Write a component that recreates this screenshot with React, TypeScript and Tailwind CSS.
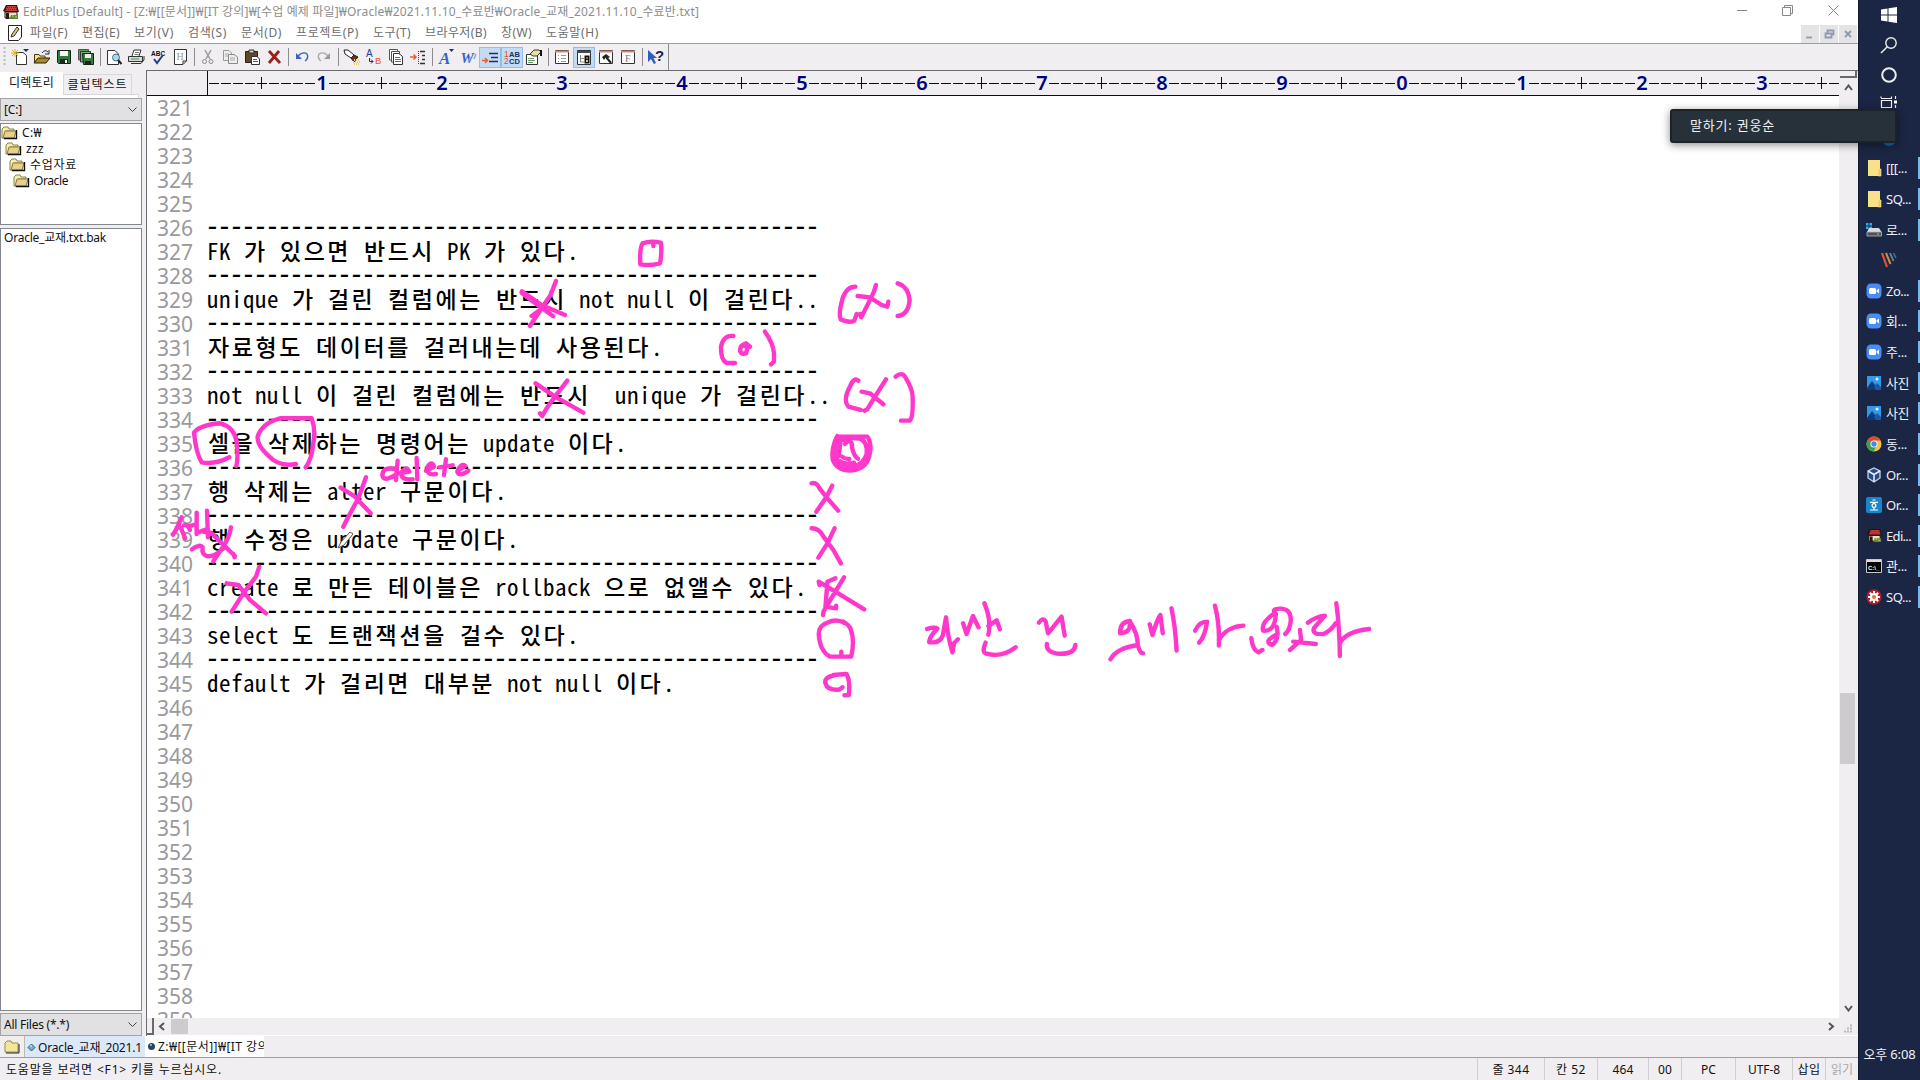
import { useLayoutEffect, useRef } from 'react';
import type { ReactNode } from 'react';

/** Text whose letter spacing is adjusted so that it spans `w` pixels. */
function Fit({ w, children, className = '' }: { w: number; children: string; className?: string }) {
  const ref = useRef<HTMLSpanElement>(null);
  useLayoutEffect(() => {
    const el = ref.current;
    if (!el) return;
    el.style.letterSpacing = '0px';
    const natural = el.getBoundingClientRect().width;
    el.style.letterSpacing = `${(w - natural) / children.length}px`;
  }, [w, children]);
  return (
    <span ref={ref} className={`inline-block shrink-0 whitespace-pre ${className}`}>
      {children}
    </span>
  );
}

const RULE = '-'.repeat(51);
const LINES: Record<number, string> = {
  326: RULE,
  327: 'FK 가 있으면 반드시 PK 가 있다.',
  328: RULE,
  329: 'unique 가 걸린 컬럼에는 반드시 not null 이 걸린다..',
  330: RULE,
  331: '자료형도 데이터를 걸러내는데 사용된다.',
  332: RULE,
  333: 'not null 이 걸린 컬럼에는 반드시  unique 가 걸린다..',
  334: RULE,
  335: '셀을 삭제하는 명령어는 update 이다.',
  336: RULE,
  337: '행 삭제는 alter 구문이다.',
  338: RULE,
  339: '행 수정은 update 구문이다.',
  340: RULE,
  341: 'create 로 만든 테이블은 rollback 으로 없앨수 있다.',
  342: RULE,
  343: 'select 도 트랜잭션을 걸수 있다.',
  344: RULE,
  345: 'default 가 걸리면 대부분 not null 이다.',
};

function CodeLine({ text }: { text: string }) {
  if (text === RULE) {
    return (
      <span className="mb-[2px] -ml-[3px] font-['DejaVu_Sans_Mono',monospace] text-[28px] leading-6 tracking-[-4.857px]">{text}</span>
    );
  }
  const runs = text.match(/[가-힣]+|[^가-힣]+/g) ?? [];
  return (
    <span className="mb-[5px] flex items-center">
      {runs.map((r, i) =>
        /[가-힣]/.test(r) ? (
          <Fit key={i} w={r.length * 24} className="pl-px font-['Noto_Sans_CJK_KR',sans-serif] text-[23px] font-medium">
            {r}
          </Fit>
        ) : (
          <Fit key={i} w={r.length * 12} className="font-['Noto_Sans_Mono_CJK_KR','DejaVu_Sans_Mono',monospace] text-[23px] font-medium">
            {r}
          </Fit>
        ),
      )}
    </span>
  );
}

const I = ({ children, w = 18, h = 16 }: { children: ReactNode; w?: number; h?: number }) => (
  <svg width={w} height={h} viewBox={`0 0 ${w} ${h}`} fill="none" className="shrink-0">
    {children}
  </svg>
);

const FolderOpen = () => (
  <I w={17} h={14}>
    <path d="M1 3 L3 1 H7 L8 3 H13 V5 H5 L3 12 H1Z" fill="#f5edb0" stroke="#8a8340" />
    <path d="M4 5 H15 L13 12 H2Z" fill="#e8d08c" stroke="#8a7a40" />
    <path d="M15.500 4 V12.500 H3" stroke="#111" strokeWidth="1.400" />
  </I>
);

const House = ({ s = 16 }: { s?: number }) => (
  <svg width={s} height={s} viewBox="0 0 16 16" className="shrink-0">
    <path d="M3 1 H14 L16 8 H2 L0 7Z" fill="#2a1010" />
    <path d="M4 2 H13 L14.500 7 H2Z" fill="#c9403a" />
    <path d="M4 3.500 H13 M3 5.500 H14" stroke="#7b1c1c" strokeDasharray="1 1" />
    <path d="M2 8 H14 V14 H2Z" fill="#eadfc8" stroke="#2a1010" />
    <path d="M3 9 H6 V15 H3Z" fill="#301515" />
    <path d="M8 11 H15 V15 H7Z" fill="#5f8a35" />
    <path d="M9 12 h2 M12 13 h2" stroke="#e7c84a" />
  </svg>
);

const A = { fontFamily: 'Liberation Sans' };

const TOOLS: (ReactNode | '|')[] = [
  <I><path d="M5.500 3.500 H12 L15.500 6.500 V15.500 H5.500Z" fill="#fff" stroke="#333" /><path d="M4 0 V8 M0 4 H8 M1 1 L7 7 M7 1 L1 7" stroke="#e8b020" /><path d="M12 0 H18 L15 3Z" fill="#1d2f6b" /></I>,
  <I><path d="M1.500 13 V5.500 H6 L7 7 H12 V9" fill="#f5e08c" stroke="#4a3a10" /><path d="M1 14 L5 9 H17 L13 14Z" fill="#a88735" stroke="#2b2208" /><path d="M9 4 Q12 0 15 3 M16 1 V5 H12" stroke="#222" /></I>,
  <I><path d="M2.500 1.500 H15.500 V14.500 H3.500 L2.500 13.500Z" fill="#2f7a3b" stroke="#12260f" /><path d="M5 2 H13 V7 H5Z" fill="#f4f4f4" /><path d="M5 10 H13 V14 H5Z" fill="#222" /><path d="M10 11 h2 v3 h-2Z" fill="#fff" /></I>,
  <I><path d="M1.500 .5 H11.500 V11 H1.500Z" fill="#5c9c62" stroke="#4a5a48" /><path d="M3.500 2.500 H13.500 V13 H3.500Z" fill="#7fae80" stroke="#333" /><path d="M5.500 4.500 H16.500 V15.500 H6.500Z" fill="#3b7a41" stroke="#12260f" /><path d="M8 5 H14 V9 H8Z" fill="#eee" /><path d="M8 12 H14 V15 H8Z" fill="#222" /></I>,
  '|',
  <I><path d="M2.500 1.500 H10 L13.500 5 V15.500 H2.500Z" fill="#fff" stroke="#333" /><circle cx="11" cy="8.500" r="3.500" fill="#a9d8ea" stroke="#44707f" /><path d="M13 11 L16.500 15" stroke="#222" strokeWidth="2" /></I>,
  <I><path d="M5 7 L7 1 H14 L12 7" fill="#fff" stroke="#333" /><path d="M1.500 7.500 H15.500 V12.500 H1.500Z" fill="#d8d8d8" stroke="#333" /><path d="M4 14.500 H14 L17 11 V7" stroke="#333" /><path d="M4 10 h8" stroke="#4a9a4a" /><path d="M8 3.500 h4 M7.500 5.500 h4" stroke="#777" /></I>,
  <I><text x="2" y="6.500" fontSize="6.500" fontWeight="700" fill="#111" style={A}>ABC</text><path d="M5 10 L8 14 L14 6" stroke="#1d3f8c" strokeWidth="2" /></I>,
  <I><path d="M3.500 .5 H15.500 V12 L12 15.500 H3.500Z" fill="#fff" stroke="#333" /><path d="M12 15 V12 H15" stroke="#333" /><text x="5.500" y="10.500" fontSize="10" fill="#999" fontFamily="Liberation Serif">H</text></I>,
  '|',
  <I><path d="M6 1 L11 10 M12 1 L7 10" stroke="#9a9a9a" strokeWidth="1.500" /><circle cx="5.500" cy="12.500" r="2" stroke="#8a8a8a" /><circle cx="12" cy="12.500" r="2" stroke="#8a8a8a" /></I>,
  <I><path d="M2.500 1.500 H8 L10.500 4 V11.500 H2.500Z" fill="#eee" stroke="#999" /><path d="M7.500 5.500 H13 L16.500 8 V14.500 H7.500Z" fill="#eee" stroke="#8a8a8a" /><path d="M4 5 h4 M4 7 h3 M9 9 h5 M9 11 h5" stroke="#aaa" /></I>,
  <I><path d="M2.500 2.500 H14.500 V13.500 H2.500Z" fill="#5f4a2a" stroke="#222" /><path d="M6 1 H11 V4 H6Z" fill="#ccc" stroke="#333" /><path d="M8.500 7.500 H14 L16.500 10 V15.500 H8.500Z" fill="#fff" stroke="#333" /><path d="M10 10.500 h4 M10 12.500 h5" stroke="#2a6a8a" /></I>,
  <I><path d="M4 2 L15 14 M14 2 L4 14" stroke="#9e1f1a" strokeWidth="2.800" /></I>,
  '|',
  <I><path d="M5 7 Q10 2 14 5 Q16 9 12 12" stroke="#3a5fc8" strokeWidth="1.400" /><path d="M3 4 V10 H9Z" fill="#3a5fc8" /></I>,
  <I><path d="M13 7 Q9 2 4 5 Q2 9 6 12" stroke="#aaa" strokeWidth="1.400" /><path d="M15 4 V10 H9Z" fill="#999" /></I>,
  '|',
  <I><path d="M1 1 H5 L11 6 L8 9 L2 5Z" fill="#fff" stroke="#222" /><path d="M8 9 L11 6 L15 8 L11 13Z" fill="#7a231c" stroke="#222" /><path d="M11 11 h6 M10 13 h7 M11 15 h6" stroke="#e6d070" strokeDasharray="1 1" strokeWidth="2" /></I>,
  <I><text x="1" y="8" fontSize="10" fill="#1d3f8c" style={A}>A</text><text x="10" y="15" fontSize="9.500" fill="#e8503a" style={A}>B</text><path d="M4.500 9 V12.500 H8 M6 10.500 L8 12.500 L6 14.500" stroke="#1d2f6b" /></I>,
  <I><path d="M2.500 .5 H10.500 V11 H2.500Z" fill="#fff" stroke="#555" /><path d="M4.500 2.500 H12.500 V13 H4.500Z" fill="#fff" stroke="#555" /><path d="M6.500 4.500 H12 L15.500 7.500 V15.500 H6.500Z" fill="#fff" stroke="#333" /><path d="M8 8.500 h5 M8 10.500 h6 M8 12.500 h6" stroke="#3a8a5a" /></I>,
  <I><path d="M1 8 H7 M4.500 5.500 L7 8 L4.500 10.500" stroke="#e86030" strokeWidth="1.500" /><path d="M9.500 2 V15" stroke="#444" strokeDasharray="1 1" /><path d="M11 2.500 h5 M13 6.500 h3 M13 10.500 h3 M11 14.500 h5" stroke="#333" strokeWidth="1.400" /></I>,
  '|',
  <I><text x="2" y="14.500" fontSize="17" fontStyle="italic" fontWeight="700" fill="#3a62c4" fontFamily="Liberation Serif">A</text><path d="M12 0 H17 L14.500 3Z" fill="#1d2f6b" /></I>,
  <I><text x="1.500" y="14" fontSize="15" fontStyle="italic" fontWeight="700" fill="#3a62c4" fontFamily="Liberation Serif">W</text><path d="M9 13 L12 8 M15 10 L17 5" stroke="#8aa4dc" strokeWidth="1.500" /></I>,
  <I><path d="M8 4.500 H17 M10 8.500 H17 M8 12.500 H17" stroke="#1d2f6b" strokeWidth="1.500" /><path d="M1 11.500 H6 M4 9 L6.500 11.500 L4 14" stroke="#e86030" strokeWidth="1.500" /></I>,
  <I><text x="1" y="7.500" fontSize="8.500" fill="#e8502a" style={A}>1</text><text x="6" y="7.500" fontSize="7.500" fontWeight="700" fill="#1d2f6b" style={A}>AB</text><text x="1" y="15" fontSize="8.500" fill="#e8502a" style={A}>2</text><text x="6" y="15" fontSize="7.500" fontWeight="700" fill="#1d2f6b" style={A}>CD</text></I>,
  <I><path d="M1.500 5.500 H12.500 V15.500 H1.500Z" fill="#fff" stroke="#333" /><path d="M3 9.500 h6 M3 11.500 h7 M3 13.500 h5" stroke="#6a9a6a" /><path d="M5 5 L9 1 H14 L16 3 L12 7 H8Z" fill="#e3e3a0" stroke="#333" /><path d="M16 1 V7" stroke="#111" strokeWidth="2" /></I>,
  '|',
  <I><path d="M2.500 1.500 H15.500 V14.500 H2.500Z" fill="#fff" stroke="#333" /><path d="M2 2.500 H16" stroke="#c98a78" strokeWidth="2" /><path d="M5 6.500 h1 M5 9.500 h1 M5 12.500 h1 M8 6.500 h5 M8 9.500 h5 M8 12.500 h5" stroke="#999" /></I>,
  <I><path d="M2.500 1.500 H15.500 V15.500 H2.500Z" fill="#fff" stroke="#333" /><path d="M2 3 H16" stroke="#4a4a4a" strokeWidth="2" /><path d="M5.500 6 V13 H9 M5 9.500 h4" stroke="#888" /><path d="M9.500 6.500 H14.500 V14.500 H9.500Z" fill="#111" /><path d="M11 8 h2 v2 h-2Z" fill="#e33" /><path d="M11 11 h2 v2 h-2Z" fill="#8e8" /></I>,
  <I><path d="M2.500 1.500 H15.500 V14.500 H2.500Z" fill="#fff" stroke="#333" /><path d="M2 2.500 H16" stroke="#c98a78" strokeWidth="2" /><path d="M5 8 L9 5 L13 8 L11 9 L9 8 L7 11Z" fill="#222" /><path d="M9 8 L14 14" stroke="#222" strokeWidth="2" /></I>,
  <I><path d="M2.500 1.500 H15.500 V14.500 H2.500Z" fill="#fff" stroke="#333" /><path d="M2 2.500 H16" stroke="#c98a78" strokeWidth="2" /><text x="6" y="13" fontSize="10" fill="#777" fontFamily="Liberation Serif">F</text></I>,
  '|',
  <I><path d="M1 1 L1 13 L4 10 L7 15 L9 14 L6.500 9 H10Z" fill="#2f5fc4" /><text x="8" y="12" fontSize="15" fontWeight="700" fill="#1a2250" style={A}>?</text></I>,
];
const ACTIVE = new Set([25, 26, 30]);

const MENUS: [string, number][] = [
  ['파일(F)', 38], ['편집(E)', 38], ['보기(V)', 40], ['검색(S)', 39], ['문서(D)', 41],
  ['프로젝트(P)', 63], ['도구(T)', 38], ['브라우저(B)', 62], ['창(W)', 31], ['도움말(H)', 53],
];

function Ruler() {
  const cells = Array.from({ length: 136 }, (_, i) => i);
  return (
    <div className="flex h-[25px] shrink-0 border-b border-[#00007c] bg-[#f0eef1] pl-[60px]">
      <div className="flex h-full items-center border-l border-[#00007c]">
        {cells.map((i) => {
          if (i % 10 === 9)
            return (
              <span key={i} className="w-3 text-center font-['Noto_Sans',sans-serif] text-[20px] leading-[22px] font-semibold text-[#00007c]">
                {((i + 1) / 10) % 10}
              </span>
            );
          return (
            <span key={i} className="flex h-3 w-3 items-center justify-center">
              <span className="h-px w-[10px] bg-[#00007c]" />
              {i % 10 === 4 && <span className="mr-[5px] -ml-[6px] h-3 w-px bg-[#00007c]" />}
            </span>
          );
        })}
      </div>
    </div>
  );
}

const Combo = ({ children, w }: { children: string; w: number }) => (
  <div className="flex h-[23px] w-[142px] shrink-0 items-center justify-between border border-[#a3a2a5] bg-[#e1e0e2] pt-px pr-1 pl-[3px]">
    <Fit w={w}>{children}</Fit>
    <I w={9} h={6}><path d="M.5 .5 L4.500 4.500 L8.500 .5" stroke="#444" /></I>
  </div>
);

const TREE: [string, number, string][] = [
  ['C:₩', 20, 'pl-0'], ['zzz', 18, 'pl-[4px]'], ['수업자료', 47, 'pl-[8px]'], ['Oracle', 34, 'pl-[12px]'],
];

function SidePanel() {
  return (
    <div className="flex w-[146px] shrink-0 flex-col bg-[#f0eef1] text-[#111]">
      <div className="flex h-[28px] shrink-0 pt-[2px]">
        <div className="flex h-[26px] w-[63px] justify-center bg-white pt-[3px]"><Fit w={45}>디렉토리</Fit></div>
        <div className="flex h-[26px] w-[76px] flex-col border-r border-transparent">
          <div className="mt-[2px] flex h-[20px] w-[69px] items-center justify-center border border-b-0 border-[#d8d7da]"><Fit w={60}>클립텍스트</Fit></div>
          <div className="h-[4px] w-[76px] border-t border-r border-[#d8d7da] bg-white" />
        </div>
      </div>
      <Combo w={18}>[C:]</Combo>
      <div className="mt-[2px] flex h-[102px] w-[142px] shrink-0 flex-col border border-[#828790] bg-white pt-px">
        {TREE.map(([t, w, pad]) => (
          <div key={t} className={`flex h-[15.900px] items-center gap-1 ${pad}`}><FolderOpen /><Fit w={w}>{t}</Fit></div>
        ))}
      </div>
      <div className="mt-[3px] w-[142px] flex-1 border border-[#828790] bg-white pl-[3px] leading-[18px]"><Fit w={102}>Oracle_교재.txt.bak</Fit></div>
      <div className="mt-[2px]"><Combo w={65}>All Files (*.*)</Combo></div>
    </div>
  );
}

function Editor() {
  const rows = Array.from({ length: 39 }, (_, i) => 321 + i);
  return (
    <div className="flex min-w-0 flex-1 flex-col border-t border-l border-[#6b6a6d] bg-[#f0eef1]">
      <div className="flex min-h-0 flex-1">
        <div className="flex w-[1692px] shrink-0 flex-col overflow-hidden bg-white">
          <Ruler />
          <div className="flex-1 overflow-hidden">
            {rows.map((n) => (
              <div key={n} className="flex h-6 items-center leading-6">
                <span className="mb-px w-[60px] shrink-0 pl-[10px] font-['Noto_Sans',sans-serif] text-[21px] text-[#9b999b]">
                  <Fit w={36}>{String(n)}</Fit>
                </span>
                <span className="flex h-6 items-center leading-6 whitespace-pre text-black">
                  {LINES[n] && <CodeLine text={LINES[n]} />}
                </span>
              </div>
            ))}
          </div>
        </div>
        <div className="flex w-[18px] flex-col items-center">
          <div className="h-[7px] w-[17px] border-r-2 border-b-2 border-[#69686b] bg-[#f0eef1]" />
          <div className="mt-[6px]"><I w={9} h={7}><path d="M1 6 L4.500 1.500 L8 6" stroke="#555" strokeWidth="2" /></I></div>
          <div className="mt-[602px] mr-[2px] h-[71px] w-[15px] bg-[#cdcbcd]" />
          <div className="mt-auto mb-[6px]"><I w={9} h={7}><path d="M1 1 L4.500 5.500 L8 1" stroke="#555" strokeWidth="2" /></I></div>
        </div>
      </div>
      <div className="flex h-[18px] shrink-0 items-center border-b border-white">
        <div className="h-[17px] w-[7px] border-r-2 border-b-2 border-[#69686b]" />
        <div className="ml-1 w-[13px]"><I w={8} h={9}><path d="M6 1 L2 4.500 L6 8" stroke="#555" strokeWidth="2" /></I></div>
        <div className="h-[15px] w-[17px] bg-[#cdcbcd]" />
        <div className="ml-auto"><I w={8} h={9}><path d="M2 1 L6 4.500 L2 8" stroke="#555" strokeWidth="2" /></I></div>
        <div className="mt-1 mr-[5px] ml-[9px]"><I w={9} h={9}><path d="M6 1.500 h2 M3 4.500 h2 M6 4.500 h2 M0 7.500 h2 M3 7.500 h2 M6 7.500 h2" stroke="#b8b7ba" strokeWidth="2" /></I></div>
      </div>
    </div>
  );
}

const Diamond = ({ dark = false }: { dark?: boolean }) => (
  <I w={9} h={9}>
    {dark ? <circle cx="4.500" cy="4.500" r="3.500" fill="#1f4a60" /> : <path d="M4.500 1 L8 4.500 L4.500 8 L1 4.500Z" fill="#6fb0dc" stroke="#2a5a7a" />}
    <path d="M3 3 h2" stroke="#fff" />
  </I>
);

const Cell = ({ w, children, cls }: { w: number; children: string; cls: string }) => (
  <div className={`flex h-full shrink-0 items-center justify-center border-l border-[#cfced1] pt-[2px] ${cls}`}><Fit w={w}>{children}</Fit></div>
);

const Folder = () => (
  <I w={16} h={18}><path d="M2 1 H14 V17 H2Z" fill="#fbe08a" /><path d="M12 10 H15 V17 H12Z" fill="#eec95c" stroke="#fbe9a8" strokeWidth=".6" /></I>
);
const Zoom = () => (
  <I w={16} h={16}><rect x=".5" y=".5" width="15" height="15" rx="4.500" fill="#4a8cf7" /><rect x="3" y="5" width="7" height="6" rx="1.500" fill="#fff" /><path d="M10.500 7.500 L13 5.500 V10.500 L10.500 8.500Z" fill="#fff" /></I>
);
const Photo = () => (
  <I w={16} h={16}><path d="M1 1 H15 V15 H1Z" fill="#2f9ae8" /><path d="M1 13 L6 6 L13 15 H1Z" fill="#0f3a78" /><path d="M8 12 L11 8 L15 12 V15 H10Z" fill="#1b58a8" /><circle cx="11" cy="4" r="1.500" fill="#e6f4ff" /></I>
);
const TASKS: [ReactNode, string, number][] = [
  [<Folder />, '[[[...', 21],
  [<Folder />, 'SQ...', 25],
  [<I w={16} h={16}><path d="M0 1 h2.500 v2.500 h-2.500Z M3.500 1 h2.500 v2.500 h-2.500Z M0 4.500 h2.500 v2.500 h-2.500Z M3.500 4.500 h2.500 v2.500 h-2.500Z" fill="#29b0ee" /><path d="M3 6 H13 L15.500 10 H1Z" fill="#d7dadd" /><path d="M1 10 H15.500 V14 H1Z" fill="#4c5258" stroke="#b9bdc1" strokeWidth=".8" /><path d="M11 12 h2" stroke="#6de04a" /></I>, '로...', 21],
  [null, '', 0],
  [<Zoom />, 'Zo...', 23],
  [<Zoom />, '회...', 21],
  [<Zoom />, '주...', 21],
  [<Photo />, '사진', 23],
  [<Photo />, '사진', 23],
  [<I w={16} h={16}><circle cx="8" cy="8" r="7.500" fill="#f2c534" /><path d="M8 8 L1.500 4.300 A7.500 7.500 0 0 1 14.600 4.500 H8Z" fill="#e2483a" /><path d="M1.500 4.300 A7.500 7.500 0 0 0 7.500 15.500 L10.500 10 L8 8Z" fill="#37a053" /><circle cx="8" cy="8" r="3.600" fill="#fff" /><circle cx="8" cy="8" r="2.700" fill="#4787ee" /></I>, '동...', 21],
  [<I w={16} h={16}><path d="M8 1 L14 4 V11 L8 15 L2 11 V4Z" fill="#294a80" stroke="#c4d6ea" strokeWidth="1.300" /><path d="M2 4 L8 7.500 L14 4 M8 7.500 V15" stroke="#e2ecf6" strokeWidth="1.600" /></I>, 'Or...', 22],
  [<I w={16} h={16}><rect width="16" height="16" rx="2" fill="#1787cc" /><path d="M6.500 3 h3 M4 5.300 h8 M8 10.500 v2 M4 13 h8" stroke="#fff" strokeWidth="1.200" /><circle cx="8" cy="8.500" r="1.900" stroke="#fff" strokeWidth="1.200" /></I>, 'Or...', 22],
  [<House s={15} />, 'Edi...', 25],
  [<I w={16} h={14}><path d="M.5 .5 H15.500 V13.500 H.5Z" fill="#000" stroke="#c8c8c8" /><path d="M1 2 H15" stroke="#ddd" strokeWidth="2" /><text x="2" y="10.500" fontSize="6" fontWeight="700" fill="#fff" style={A}>C:\_</text></I>, '관...', 21],
  [<I w={16} h={16}><circle cx="8" cy="8" r="7.700" fill="#a81f30" /><path d="M8 2 V14 M2 8 H14 M3.800 3.800 L12.200 12.200 M12.200 3.800 L3.800 12.200" stroke="#fff" strokeWidth="2" /><circle cx="8" cy="8" r="4" fill="#fff" /><circle cx="8" cy="8" r="2" fill="#e8702a" /></I>, 'SQ...', 25],
];

function Taskbar() {
  return (
    <div className="flex w-[62px] shrink-0 flex-col items-center border-l border-[#131b33] bg-[#1b2644] text-[13px] text-[#eef1f6]">
      <div className="mr-px flex h-[30px] items-center"><I w={18} h={18}><path d="M1 3.500 L7.500 2.500 V8.500 H1Z M8.500 2.300 L17 1 V8.500 H8.500Z M1 9.500 H7.500 V15.500 L1 14.500Z M8.500 9.500 H17 V17 L8.500 15.700Z" fill="#fff" /></I></div>
      <div className="mr-px flex h-[30px] items-center"><I w={18} h={18}><circle cx="11" cy="7" r="5.200" stroke="#eee" strokeWidth="1.400" /><path d="M7.300 10.700 L1 17" stroke="#eee" strokeWidth="1.500" /></I></div>
      <div className="mr-px flex h-[30px] items-center"><I w={18} h={18}><circle cx="9" cy="9" r="6.800" stroke="#eee" strokeWidth="2" /></I></div>
      <div className="mr-px flex h-[63px] items-start pt-[6px]"><I w={18} h={14}><path d="M1.500 4.500 H11.500 V11.500 H1.500Z M1 2 V.5 M11.500 2 V.5 M1 2.500 H12 M15.500 0 V3 M15.500 9 V12" stroke="#eee" strokeWidth="1.200" /><path d="M14 4.500 h3 v3 h-3Z" fill="#fff" /></I></div>
      {TASKS.map(([icon, label, w], i) =>
        label ? (
          <div key={i} className="flex h-[30.640px] w-full items-center pl-[7px]">
            <span className="flex w-4 justify-center">{icon}</span>
            <span className="ml-[4px]"><Fit w={w}>{label}</Fit></span>
            <span className="ml-auto h-[22px] w-[2px] bg-[#76b9ed]" />
          </div>
        ) : (
          <div key={i} className="mr-px flex h-[30.640px] items-center">
            <I w={18} h={18}><path d="M2 2 L7 16" stroke="#d8563c" strokeWidth="2.200" /><path d="M6 2 L10.500 13" stroke="#d98a4a" strokeWidth="2" /><path d="M10 2 L13.500 10" stroke="#5f8f92" strokeWidth="1.800" /><path d="M13.500 2 L16 7" stroke="#3c6fa8" strokeWidth="1.600" /></I>
          </div>
        ),
      )}
      <div className="mt-auto mb-[16px] flex h-5 items-center"><Fit w={52}>오후 6:08</Fit></div>
    </div>
  );
}

const STROKES = [
  { t: 'translate(140 210) scale(.3333)', d: 'M1145 248 L1180 275 L1240 319 M1146 244 L1205 285 L1275 315 M1248 213 L1232 255 L1205 295 L1170 348 M1175 318 L1200 300 M1187 520 L1245 560 L1330 608 M1282 512 L1245 560 L1220 595 L1207 618 L1200 610 M268 742 Q225 765 185 757 Q168 730 162 668 Q180 645 240 640 Q280 650 289 690 Q296 740 289 768 M468 762 Q430 770 400 750 Q350 710 353 680 Q365 640 420 625 L515 625 Q528 660 520 700 Q515 750 497 772' },
  { t: 'translate(600 210) scale(.3333)', d: 'M128 100 Q118 115 121 163 Q150 168 180 160 Q186 130 183 98 Q150 92 128 100 M160 97 V108 M766 230 Q740 230 728 265 Q715 310 722 328 Q745 340 763 332 L770 312 M773 258 L810 262 L845 285 L862 290 L865 275 M828 225 L822 245 L800 290 L784 322 L780 312 M893 220 Q925 230 929 270 Q925 315 893 318 M400 378 Q370 375 363 410 Q362 450 380 459 H405 M450 410 L438 400 Q420 405 420 422 Q425 435 438 430 L443 412 L428 406 M495 365 Q520 400 522 430 L522 455 L513 463 M775 512 Q762 500 750 530 Q728 570 745 590 L782 600 M785 545 L810 550 L850 583 M858 508 L825 560 L802 598 L793 602 M887 500 Q905 485 915 500 Q940 540 938 565 Q940 620 930 632 H903' },
  { t: 'translate(600 210) scale(.3333)', d: 'M712 678 Q694 712 698 748 Q710 782 752 782 Q798 778 808 738 Q818 700 802 680 H712 M722 688 Q706 712 708 742 Q722 774 758 770 Q792 762 800 732 Q804 696 780 686 Q745 680 722 692 L716 738 M726 740 Q736 748 748 747 M735 702 L748 690 Q758 700 756 712 Q762 740 774 746 M716 752 Q735 766 762 758' },
  { t: 'translate(150 440) scale(.3333)', d: 'M572 143 L615 170 L662 220 M648 112 L625 175 L590 240 L580 260 M743 62 L738 120 M733 87 Q700 80 697 105 Q700 128 738 104 M748 100 L778 95 Q770 76 755 96 Q750 122 788 118 M800 54 L802 118 M828 92 L852 80 Q846 62 834 78 Q826 108 858 102 M888 58 L882 105 M868 82 L908 76 M924 92 L946 78 Q932 68 922 95 Q928 112 955 92 M230 430 L265 435 L300 480 L348 520 M328 380 L318 410 L280 460 L245 515' },
  { t: 'translate(60 500) scale(.3333)', d: 'M365 52 Q352 85 339 104 M350 82 Q366 80 366 92 L376 115 M372 76 Q382 72 390 90 M410 38 V102 M441 32 L444 112 M384 80 L410 72 M412 98 L440 88 M396 148 Q420 130 428 142 Q424 162 440 168 Q466 172 488 146 M432 96 Q452 92 465 110 L525 168 M513 82 Q508 112 492 136 L460 184 M520 162 L524 172' },
  { t: 'translate(780 440) scale(.3954 .3333)', d: 'M80 130 Q92 125 100 145 L120 175 L147 212 M132 137 L117 172 L92 215 M80 265 Q100 265 110 290 L135 330 L154 370 M138 265 L120 310 L97 353 M100 435 L98 425 L140 455 L213 508 M162 412 L135 465 L110 515 L109 525 M140 415 L120 425 L115 500 L142 505 V497 M165 550 Q142 535 122 547 Q98 555 98 582 Q100 632 126 650 H180 Q190 600 178 565 Q172 552 160 545 M155 635 v12 M140 705 Q110 712 115 730 Q120 752 150 749 L158 742 M135 705 L168 702 Q178 720 174 765 L163 766 M372 567 Q392 560 398 566 Q378 590 377 606 Q405 612 412 585 L420 532 Q424 590 436 637 L440 610 L450 598 M463 550 L472 582 L488 528 L502 562 M517 490 Q535 540 527 584 M527 558 L548 541 L556 568 M520 608 Q510 635 520 640 Q560 655 596 622 M655 548 Q665 530 672 545 L678 580 L712 530 L720 587 M675 612 Q672 635 700 641 Q745 645 747 615 M885 543 Q860 545 860 580 Q890 578 884 543 Q905 580 905 615 Q910 640 918 640 M905 615 Q850 625 836 658 M935 553 L942 585 Q955 535 962 525 L968 580 M990 505 Q1000 560 1003 632 M1050 572 Q1060 545 1080 545 Q1075 590 1060 608 M1100 497 Q1112 550 1110 617 M1110 600 Q1130 560 1172 557 M1192 595 Q1195 630 1210 637 L1220 630 M1250 520 Q1215 550 1222 572 Q1252 575 1254 522 Q1240 505 1268 506 Q1292 508 1292 540 Q1290 570 1278 582 M1256 560 Q1264 600 1244 615 Q1222 605 1254 585 M1315 570 L1318 600 L1290 630 M1298 605 L1355 612 M1335 548 Q1355 530 1378 527 L1350 565 Q1345 585 1375 582 Q1395 570 1405 550 M1407 490 Q1415 560 1416 648 M1416 610 Q1430 575 1490 567' },
];

function PenMarks() {
  return (
    <svg width="1920" height="1080" className="pointer-events-none absolute top-0 left-0" fill="none">
      {STROKES.map((g, i) => (
        <path key={i} d={g.d} transform={g.t} stroke="#ff37cb" strokeWidth="4.400" strokeLinecap="round" strokeLinejoin="round" vectorEffect="non-scaling-stroke" />
      ))}
      <path d="M338 548 L341 542 L350 532 L353 534 L344 545Z" fill="#fff" stroke="#555" />
    </svg>
  );
}

export default function App() {
  return (
    <div className="relative flex h-[1080px] w-[1920px] overflow-hidden bg-white font-['Noto_Sans','Noto_Sans_CJK_KR',sans-serif] text-[12px] leading-[16px] text-[#111]">
      <div className="flex w-[1858px] shrink-0 flex-col">
        <div className="flex h-[23px] shrink-0 items-center pl-[3px] text-[#8d8d8d]">
          <House />
          <Fit w={676} className="ml-1">{'EditPlus [Default] - [Z:₩[[문서]]₩[IT 강의]₩[수업 예제 파일]₩Oracle₩2021.11.10_수료반₩Oracle_교재_2021.11.10_수료반.txt]'}</Fit>
          <div className="mb-[3px] ml-auto flex items-center gap-[35px] pr-[19px]">
            <I w={10} h={10}><path d="M0 5.500 H10" stroke="#888" /></I>
            <I w={11} h={11}><path d="M.5 2.500 H8.500 V10.500 H.5Z M2.500 2.500 V.5 H10.500 V8.500 H8.500" stroke="#888" /></I>
            <I w={11} h={11}><path d="M.5 .5 L10.500 10.500 M10.500 .5 L.5 10.500" stroke="#888" /></I>
          </div>
        </div>
        <div className="flex h-[20px] shrink-0 items-center pl-[8px] text-[#6c6c6c]">
          <I w={15} h={16}><path d="M.5 .5 H13.500 V12 L10.500 15.500 H.5Z" fill="#fff" stroke="#222" /><path d="M3 12 L4 9 L9 2 L11 4 L6 11Z" fill="#d8c878" stroke="#333" /></I>
          <div className="mb-px ml-[7px] flex gap-[14px]">
            {MENUS.map(([t, w]) => <Fit key={t} w={w}>{t}</Fit>)}
          </div>
          <div className="mt-px mr-px ml-auto flex gap-px">
            {['M5 12.500 H11', 'M5.500 8.500 H11.500 V12.500 H5.500Z M7.500 8 V5.500 H13.500 V9.500 H12', 'M6 6 L12 12 M12 6 L6 12'].map((d) => (
              <div key={d} className="h-[18px] w-[18px] bg-[#e4e3e6]"><I w={18} h={18}><path d={d} stroke="#8f9bab" strokeWidth="1.800" /></I></div>
            ))}
          </div>
        </div>
        <div className="flex h-[27px] shrink-0 border-t border-[#9d9c9f] bg-[#f0eef1]">
          <div className="flex h-[26px] w-[669px] items-center border-r border-[#8c8b8e]">
            <div className="flex w-[9px] shrink-0 justify-center"><I w={3} h={20}><path d="M1.500 0 V20" stroke="#bbb" strokeWidth="2" strokeDasharray="2 2" /></I></div>
            {TOOLS.map((t, i) =>
              t === '|' ? (
                <div key={i} className="flex w-[6px] shrink-0 justify-center"><div className="h-[18px] w-px bg-[#8c8b8e]" /></div>
              ) : (
                <div key={i} className={`flex h-[21px] w-[22px] shrink-0 items-center justify-center ${ACTIVE.has(i) ? 'border border-[#92bfea] bg-[#c3dbf3]' : ''}`}>{t}</div>
              ),
            )}
          </div>
        </div>
        <div className="flex min-h-0 flex-1">
          <SidePanel />
          <Editor />
        </div>
        <div className="flex h-[22px] shrink-0 items-center border-b border-[#9d9c9f] bg-[#f0eef1]">
          <div className="flex h-full w-[25px] items-center justify-center border-r border-[#bbb]">
            <I w={16} h={14}><path d="M1 3 L3 1 H7 L8 3 H14 V12 H1Z" fill="#f5e79a" stroke="#9a8c3c" /><path d="M15 4 V13 H2" stroke="#222" /></I>
          </div>
          <div className="flex h-full w-[120px] items-center gap-[2px] overflow-hidden bg-[#dbe8f8] pt-[2px] pl-[2px]"><Diamond /><Fit w={104}>Oracle_교재_2021.1</Fit></div>
          <div className="flex h-full w-[119px] items-center gap-[2px] overflow-hidden bg-white pl-[2px]"><Diamond dark /><Fit w={111}>Z:₩[[문서]]₩[IT 강의</Fit></div>
        </div>
        <div className="flex h-[22px] shrink-0 items-center bg-[#f0eef1] pl-[6px]">
          <Fit w={216} className="mt-[2px]">도움말을 보려면 &lt;F1&gt; 키를 누르십시오.</Fit>
          <div className="ml-auto flex h-full">
            <Cell cls="w-[67px]" w={37}>줄 344</Cell>
            <Cell cls="w-[53px]" w={30}>칸 52</Cell>
            <Cell cls="w-[51px]" w={21}>464</Cell>
            <Cell cls="w-[33px]" w={14}>00</Cell>
            <Cell cls="w-[54px]" w={15}>PC</Cell>
            <Cell cls="w-[57px]" w={32}>UTF-8</Cell>
            <Cell cls="w-[33px]" w={23}>삽입</Cell>
            <Cell cls="w-[33px] text-[#a9a8ab]" w={22}>읽기</Cell>
          </div>
        </div>
      </div>
      <Taskbar />
      <PenMarks />
      <div className="absolute top-[137px] left-[1882px] h-[9px] w-[14px] rounded-b-full bg-[#1268a8]" />
      <div className="absolute top-[109px] left-[1670px] flex h-[34px] w-[227px] items-center rounded-[3px] border-2 border-[#1c2226] bg-[#27313a] pb-[2px] pl-[18px] text-[13px] text-[#f1f3f4] shadow-[0_2px_8px_rgba(0,0,0,0.45)]">
        <Fit w={85}>말하기: 권웅순</Fit>
      </div>
    </div>
  );
}
